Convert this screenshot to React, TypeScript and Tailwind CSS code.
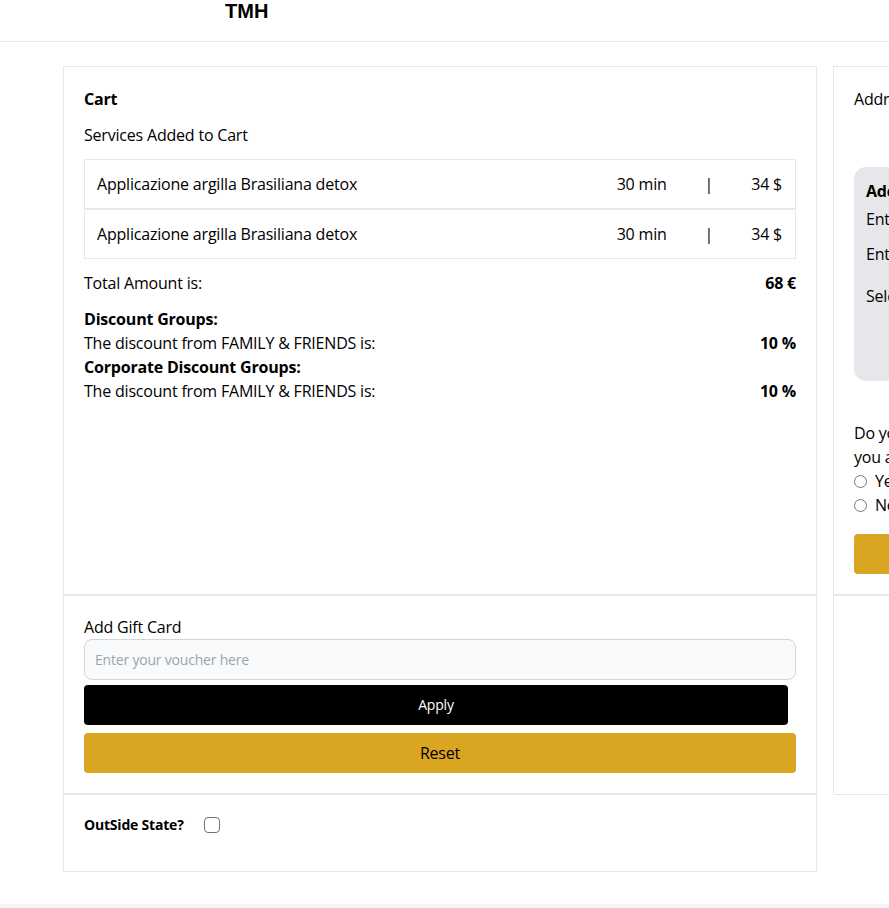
import { useState } from "react"

type CartItem = {
  name: string
  duration: string
  price: string
}

const items: CartItem[] = [
  { name: "Applicazione argilla Brasiliana detox", duration: "30 min", price: "34 $" },
  { name: "Applicazione argilla Brasiliana detox", duration: "30 min", price: "34 $" },
]

function CartRow({ name, duration, price }: CartItem) {
  return (
    <div className="flex h-[50px] items-center justify-between border border-[#e5e7eb] pl-3 pr-[13px]">
      <span>{name}</span>
      <div className="flex items-center gap-[38px]">
        <span>{duration}</span>
        <span>|</span>
        <span>{price}</span>
      </div>
    </div>
  )
}

export default function App() {
  const [outside, setOutside] = useState(false)
  const [voucher, setVoucher] = useState("")

  return (
    <div className="min-h-screen w-full overflow-x-hidden bg-white font-['Open_Sans',sans-serif] text-base tracking-[-0.2px] text-black">
      <header className="h-[42px] border-b border-[#e5e7eb] pl-[225px]">
        <h1 className="font-['Liberation_Sans',sans-serif] text-[20px] font-bold leading-[22px] tracking-normal">TMH</h1>
      </header>

      <main className="flex gap-4 pb-8 pl-[63px] pt-6">
        {/* cart */}
        <div className="w-[754px] shrink-0 border border-[#e5e7eb]">
          <section className="h-[527px] p-5">
            <h2 className="font-bold leading-6">Cart</h2>
            <p className="mt-3 leading-6">Services Added to Cart</p>
            <div className="mt-3">
              {items.map((item, i) => (
                <CartRow key={i} {...item} />
              ))}
            </div>
            <div className="mt-3 flex justify-between leading-6">
              <span>Total Amount is:</span>
              <span className="font-bold">68 €</span>
            </div>
            <div className="mt-3 leading-6">
              <p className="font-bold">Discount Groups:</p>
              <div className="flex justify-between">
                <span>The discount from FAMILY &amp; FRIENDS is:</span>
                <span className="font-bold">10 %</span>
              </div>
              <p className="font-bold">Corporate Discount Groups:</p>
              <div className="flex justify-between">
                <span>The discount from FAMILY &amp; FRIENDS is:</span>
                <span className="font-bold">10 %</span>
              </div>
            </div>
          </section>

          <section className="border-t-2 border-[#e5e7eb] px-5 pb-5 pt-[19px]">
            <label className="block leading-6">Add Gift Card</label>
            <input
              value={voucher}
              onChange={(e) => setVoucher(e.target.value)}
              placeholder="Enter your voucher here"
              className="h-[41px] w-full rounded-lg border border-[#d1d5db] bg-[#f9fafb] px-[10px] text-sm placeholder:text-[#9ca3af] outline-none"
            />
            <button className="mt-[5px] h-10 w-[704px] rounded-sm bg-black text-sm font-medium text-white">
              Apply
            </button>
            <button className="mt-2 h-10 w-full rounded bg-[#daa520] text-base text-black">
              Reset
            </button>
          </section>

          <section className="h-[78px] border-t-2 border-[#e5e7eb] px-5 pt-[22px]">
            <div className="flex h-4 items-center gap-5">
              <span className="text-sm font-bold">OutSide State?</span>
              <input
                type="checkbox"
                checked={outside}
                onChange={() => setOutside(!outside)}
                className="h-4 w-4 appearance-none rounded border border-[#6b7280] bg-white"
              />
            </div>
          </section>
        </div>

        {/* address */}
        <div className="h-[729px] w-[400px] shrink-0 border border-[#e5e7eb]">
          <section className="h-[527px] p-5">
            <p className="leading-6">Address Details</p>
            <div className="mt-[56px] h-[214px] rounded-xl bg-[#e5e7eb] px-3 pt-3">
              <p className="font-bold leading-6">Add New Address</p>
              <p className="mt-1 leading-6">Enter your street</p>
              <p className="mt-[11px] leading-6">Enter your city</p>
              <p className="mt-[18px] leading-6">Select your state</p>
            </div>
            <p className="mt-10 leading-6">
              Do you want to use this address
              <br />
              you already have?
            </p>
            <label className="flex items-center gap-2 leading-6">
              <input type="radio" name="addr" className="h-[13px] w-[13px]" />
              Yes
            </label>
            <label className="flex items-center gap-2 leading-6">
              <input type="radio" name="addr" className="h-[13px] w-[13px]" />
              No
            </label>
            <button className="mt-[17px] h-10 w-full rounded bg-[#daa520]">Continue</button>
          </section>
          <section className="border-t-2 border-[#e5e7eb]" />
        </div>
      </main>

      <footer className="h-10 bg-[#f3f4f6]" />
    </div>
  )
}
